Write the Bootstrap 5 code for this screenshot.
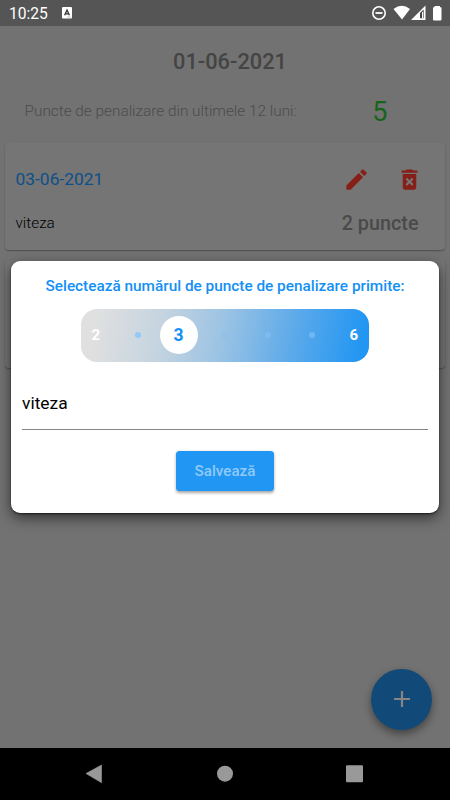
<!DOCTYPE html>
<html lang="ro">
<head>
<meta charset="utf-8">
<meta name="viewport" content="width=device-width, initial-scale=1">
<title>Puncte de penalizare</title>
<link href="https://cdn.jsdelivr.net/npm/bootstrap@5.3.0/dist/css/bootstrap.min.css" rel="stylesheet">
<style>
body { font-family: Roboto, "Liberation Sans", sans-serif; background: #727272; height: 800px; overflow: hidden; line-height: 1.2; }
.status { height: 26px; background: #555; color: #fff; padding: 0 8px 0 9px; font-size: 16px; }
.clock { width: 53px; padding-top: 2px; font-size: 15.6px; }
.app-title { height: 71px; padding: 2px 0 0 10px; font-size: 21.8px; font-weight: 500; color: #444; }
.total { height: 28px; margin-bottom: 17.5px; padding: 2px 0 0 24.5px; color: #4c4c4c; }
.total-label { font-size: 15.35px; font-weight: 300; width: 325px; margin-top: -1px; }
.total-num { width: 60.5px; font-size: 27px; color: #18641b; }
.entry { height: 107.5px; margin: 0 5px 10px 4.5px; border-radius: 4px; background: #757575; box-shadow: 0 1px 1.5px rgba(0,0,0,.32); padding: 0 26.5px 0 11px; }
.entry-top { height: 52px; padding-top: 22px; }
.entry-date { font-size: 17.4px; color: #0d4f89; }
.entry-icons { gap: 26px; margin-right: -4px; }
.entry-bottom { padding-top: 17px; }
.entry-note { font-size: 15.3px; font-weight: 300; color: #000; }
.entry-points { font-size: 19.8px; font-weight: 500; color: #4a4a4a; }
.fab { right: 18px; bottom: 70.5px; width: 61px; height: 61px; background: #114a78; box-shadow: 0 4px 9px rgba(0,0,0,.42); }
.dialog-box { left: 11px; right: 11px; top: 261px; height: 252px; border-radius: 9px; background: #fff; box-shadow: 0 5px 14px rgba(0,0,0,.55), 0 1px 2px rgba(0,0,0,.6); padding: 0 11px; }
.dialog-title { height: 48px; padding-top: 2px; font-size: 15.35px; font-weight: 500; color: #1490f5; white-space: nowrap; }
.slider { width: 288px; height: 53px; border-radius: 16px; background: linear-gradient(100deg, #e0e0e0 5%, #c5d4e0 28%, #9bc3e4 49%, #5aa9ea 74%, #2196f3 97%); color: #fff; font-size: 15px; font-weight: 700; padding: 0 11px 1px 10.5px; }
.dot { width: 6px; height: 6px; background: #90caf9; }
.dot-soft { background: #7dbdf5; opacity: .75; }
.dot-faint { opacity: .3; }
.gap-dot { margin-left: 34.5px; }
.knob { width: 38px; height: 38px; margin-left: 19px; margin-right: -14px; background: #fff; color: #1490f5; font-size: 17.5px; }
.knob ~ .dot { margin-left: 37.7px; }
.note-field { height: 68px; padding-top: 16px; border-bottom: 1px solid #858585; font-size: 17.4px; color: #000; }
.save { margin-top: 21px; margin-right: 0; width: 98px; height: 40px; border-radius: 3.5px; background: #2196f3; color: #90caf9; font-size: 15.2px; font-weight: 500; box-shadow: 0 1.5px 3px rgba(0,0,0,.35); padding: 1px 0 0; border: 0; }
.sysbar { height: 52px; background: #000; }
svg { display: block; }
</style>
</head>
<body class="d-flex flex-column position-relative">
<header class="status d-flex align-items-center justify-content-between flex-shrink-0">
  <div class="d-flex align-items-center"><span class="clock">10:25</span>
    <svg width="10" height="12" viewBox="0 0 10 12"><rect width="10" height="11.5" rx="1" fill="#fff"/><path d="M2.600 8.300 5 3l2.400 5.300M3.400 6.800h3.200" fill="none" stroke="#333" stroke-width="1.300"/><path d="M5 10h4" stroke="#aaa" stroke-width=".7"/></svg>
  </div>
  <svg width="72" height="18" viewBox="370 4 72 18"><circle cx="379" cy="13" r="6.200" fill="none" stroke="#fff" stroke-width="1.600"/><path d="M375.500 13h7" stroke="#fff" stroke-width="1.800"/><path d="M393.500 9Q401.800 2.500 410 9L402 19.500Z" fill="#fff"/><path d="M411 20 425.500 5.500V20Z" fill="#fff"/><path d="M420 13 423.600 9.500V18.300H420Z" fill="#444"/><path d="M422.500 12v6.300" stroke="#fff" stroke-width="1"/><path d="M434.500 6v1.300H433.500Q433 7.300 433 8V19.500Q433 20.500 434 20.500H440.500Q441.500 20.500 441.500 19.500V8Q441.500 7.300 441 7.300H440V6Z" fill="#fff"/></svg>
</header>
<main class="flex-grow-1 overflow-hidden">
  <h1 class="app-title d-flex align-items-center justify-content-center m-0">01-06-2021</h1>
  <section class="total d-flex align-items-center">
    <span class="total-label">Puncte de penalizare din ultimele 12 luni:</span>
    <span class="total-num text-center">5</span>
  </section>
  <article class="entry">
    <div class="entry-top d-flex align-items-center justify-content-between">
      <span class="entry-date">03-06-2021</span>
      <div class="entry-icons d-flex">
        <svg width="27" height="27" viewBox="0 0 24 24" fill="#851f18"><path d="M3 17.250V21h3.750L17.810 9.940l-3.750-3.750L3 17.250zM20.710 7.040a1 1 0 0 0 0-1.410l-2.340-2.340a1 1 0 0 0-1.410 0l-1.830 1.830 3.750 3.750 1.830-1.830z"/></svg>
        <svg width="27" height="27" viewBox="0 0 24 24" fill="#851f18"><path d="M6 19c0 1.100.900 2 2 2h8c1.100 0 2-.900 2-2V7H6v12zm2.460-7.120 1.410-1.410L12 12.590l2.120-2.120 1.410 1.410L13.410 14l2.120 2.120-1.410 1.410L12 15.410l-2.120 2.120-1.410-1.410L10.590 14l-2.130-2.120zM15.500 4l-1-1h-5l-1 1H5v2h14V4z"/></svg>
      </div>
    </div>
    <div class="entry-bottom d-flex align-items-center justify-content-between">
      <span class="entry-note">viteza</span><span class="entry-points">2 puncte</span>
    </div>
  </article>
  <article class="entry"></article>
</main>
<button class="fab btn rounded-circle border-0 p-0 position-absolute d-flex align-items-center justify-content-center" aria-label="Adaugă">
  <svg width="16" height="16" viewBox="0 0 16 16"><path d="M8 0v16M0 8h16" stroke="#858585" stroke-width="2.200"/></svg>
</button>
<section class="dialog-box position-absolute d-flex flex-column align-items-center" role="dialog">
  <div class="dialog-title d-flex align-items-center">Selectează numărul de puncte de penalizare primite:</div>
  <div class="slider d-flex align-items-center">
    <span>2</span><i class="dot gap-dot rounded-circle"></i>
    <span class="knob rounded-circle d-flex align-items-center justify-content-center">3</span>
    <i class="dot dot-soft dot-faint rounded-circle"></i>
    <i class="dot dot-soft rounded-circle"></i>
    <i class="dot dot-soft rounded-circle"></i>
    <span class="ms-auto">6</span>
  </div>
  <div class="note-field w-100 d-flex align-items-center">viteza</div>
  <button class="save btn">Salvează</button>
</section>
<footer class="sysbar flex-shrink-0">
  <svg width="450" height="52" viewBox="0 748 450 52" fill="#999"><path d="M86 773.500 101.500 765V782.700Z" stroke="#999" stroke-width=".6"/><circle cx="225" cy="773.700" r="8"/><rect x="346" y="765.200" width="17" height="17" rx="1"/></svg>
</footer>
<script src="https://cdn.jsdelivr.net/npm/bootstrap@5.3.0/dist/js/bootstrap.bundle.min.js"></script>
</body>
</html>
